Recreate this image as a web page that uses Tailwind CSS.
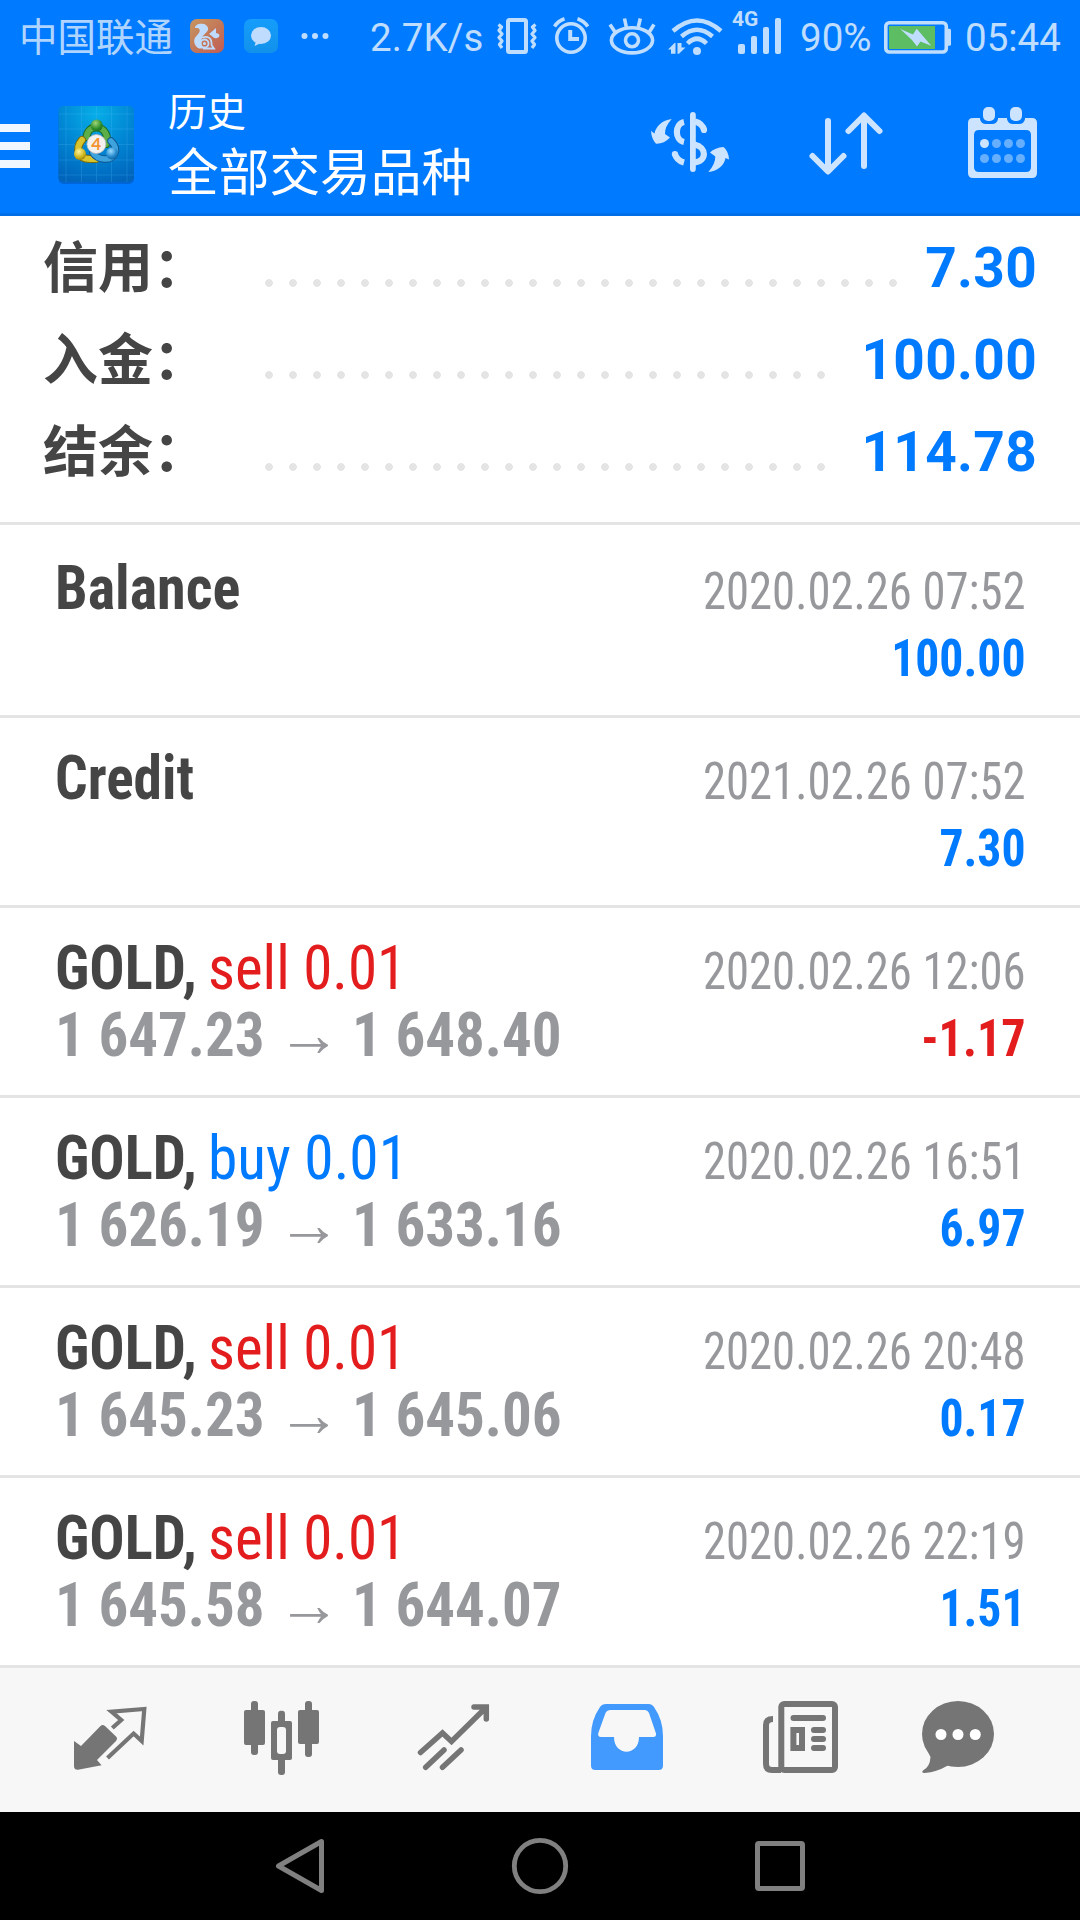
<!DOCTYPE html>
<html lang="zh-CN">
<head>
<meta charset="utf-8">
<title>历史</title>
<script src="https://cdn.jsdelivr.net/npm/@tailwindcss/browser@4"></script>
</head>
<body class="w-[1080px] h-[1920px] overflow-hidden bg-white font-['Roboto','Noto_Sans_CJK_SC',sans-serif]">
<div class="flex flex-col w-[1080px] h-[1920px]">

<header class="h-[216px] shrink-0 bg-[#007aff] border-b-[3px] border-[#006fe8]">
  <!-- status bar -->
  <div class="flex h-[75px] text-[38.5px] leading-[75px] whitespace-nowrap text-white/75">
    <span class="ml-[19px] w-[154px] shrink-0 text-white/70">中国联通</span>
    <svg class="ml-[17px] mt-[19px] shrink-0" width="34" height="34" viewBox="190 19 34 34">
      <defs><linearGradient id="uc" x1="0" y1="0" x2="1" y2="1"><stop offset="0" stop-color="#c7965f"/><stop offset="1" stop-color="#c05c54"/></linearGradient></defs>
      <rect x="190" y="19" width="34" height="34" rx="7" fill="url(#uc)"/>
      <path d="M195 28C195 22.500 207 22 208 28C209 32 203 34 202 38C200 42 202 46 203.500 48.500H199C194 46 193 40 195.500 37C198 34 200.500 32 199.500 29.500C198.500 27.500 197 28 195 28Z" fill="#bfdcff"/>
      <path d="M209 34L216 28V33L219 34C220 36 219 37.500 217 38C213 39 213 36 209 34Z" fill="#bfdcff"/>
      <circle cx="204.500" cy="43.500" r="4" fill="none" stroke="#bfdcff" stroke-width="1.800"/><circle cx="204.500" cy="43.500" r="1.600" fill="#bfdcff"/>
      <path d="M202 37.500C208 35.500 212 38 211.500 45L214 48.500H203" fill="none" stroke="#bfdcff" stroke-width="1.800"/>
    </svg>
    <svg class="ml-[20px] mt-[19px] shrink-0" width="34" height="34" viewBox="244 19 34 34">
      <defs><linearGradient id="msg" x1="0" y1="0" x2="0" y2="1"><stop offset="0" stop-color="#159dfb"/><stop offset="1" stop-color="#1291ea"/></linearGradient></defs>
      <rect x="244" y="19" width="34" height="34" rx="7" fill="url(#msg)"/>
      <ellipse cx="261" cy="35.500" rx="10" ry="8.500" fill="#bfdcff"/><path d="M256 41L254.500 46L261 43Z" fill="#bfdcff"/>
    </svg>
    <svg class="ml-[20px] mt-[19px] shrink-0" width="34" height="34" viewBox="298 19 34 34"><g fill="#bfdeff"><circle cx="304.500" cy="36" r="3"/><circle cx="315" cy="36" r="3"/><circle cx="325.500" cy="36" r="3"/></g></svg>
    <span class="ml-[38px] w-[122px] shrink-0">2.7K/s</span>
    <svg class="shrink-0" width="236" height="75" viewBox="492 0 236 75" fill="none" stroke="#bfdeff" stroke-width="3.600">
      <!-- vibrate -->
      <rect x="508" y="20" width="18" height="32" rx="1.500" stroke-width="4"/>
      <path d="M498.500 24.500l3 2.500l-2.500 3.500l3 3.500l-3 3.500l3 3.500l-2.500 3.500l2.500 3.500M535.500 24.500l-3 2.500l2.500 3.500l-3 3.500l3 3.500l-3 3.500l2.500 3.500l-2.500 3.500" stroke-width="3.200" stroke-linejoin="round"/>
      <!-- alarm -->
      <circle cx="571" cy="38" r="14.200"/>
      <path d="M570.200 30V39H579" stroke-width="4"/>
      <path d="M554.500 26.500Q558 21 564.500 18.800M587.800 26.500Q584 21 577.500 18.800"/>
      <!-- eye -->
      <ellipse cx="632" cy="40.300" rx="20.600" ry="12.600"/><circle cx="632" cy="40.300" r="6.500"/>
      <path d="M610 24.500L615.700 33M624.500 18.500L626.300 27M640.300 18.500L638.300 27M654 24.500L648.700 33"/>
      <!-- wifi -->
      <g stroke-width="4.500"><path d="M673 31Q697 10 721 31M681.500 36.500Q697 23 712.500 36.500M687.500 43.500Q697 34 706.500 43.500"/></g>
      <circle cx="697" cy="51" r="4" fill="#bfdeff" stroke="none"/>
      <path d="M668 49.500L674.500 43H675.500V53.700H671V49.500ZM677.500 43H681.500V47.500H685.500L679 53.700H677.500Z" fill="#bfdeff" stroke="none"/>
    </svg>
    <div class="relative w-[72px] shrink-0">
      <span class="absolute left-[4px] top-[7px] text-[21px] leading-[25px] font-bold">4G</span>
      <div class="flex items-end gap-[6px] h-[54px] pl-[10px]">
        <i class="w-[7px] h-[10px] rounded-[2px] bg-[#bfdeff]"></i><i class="w-[6px] h-[18px] rounded-[2px] bg-[#bfdeff]"></i><i class="w-[6px] h-[27px] rounded-[2px] bg-[#bfdeff]"></i><i class="w-[6px] h-[36px] rounded-[2px] bg-[#bfdeff]"></i>
      </div>
    </div>
    <span class="w-[83px] shrink-0">90%</span>
    <svg class="shrink-0" width="82" height="75" viewBox="883 0 82 75">
      <rect x="885.800" y="22.800" width="60.500" height="29.200" rx="3.500" fill="none" stroke="#bfdeff" stroke-width="3.600"/>
      <path d="M948 28.700h1.500q1.500 0 1.500 1.500v14q0 1.500-1.500 1.500H948Z" fill="#bfdeff"/>
      <rect x="889" y="26" width="46" height="23" fill="#5cbd63"/>
      <path d="M900.300 29L913 34.500L916.700 28.700L931.300 45.700L920.500 41.500L917 46.500L912 40Z" fill="#bfdeff"/>
    </svg>
    <span class="shrink-0">05:44</span>
  </div>

  <!-- app bar -->
  <div class="flex h-[138px] items-start text-white">
    <div class="mt-[49px] flex w-[30px] flex-col gap-[10px]">
      <i class="h-[8px] bg-[#f0f7ff]"></i><i class="h-[8px] bg-[#f0f7ff]"></i><i class="h-[8px] bg-[#f0f7ff]"></i>
    </div>
    <svg class="ml-[25px] mt-[28px] shrink-0" width="82" height="84" viewBox="55 103 82 84">
      <defs>
        <radialGradient id="bg" cx=".5" cy=".1" r=".95"><stop offset="0" stop-color="#06aee8"/><stop offset=".55" stop-color="#0083d2"/><stop offset="1" stop-color="#0064bb"/></radialGradient>
        <radialGradient id="gr" cx=".4" cy=".3" r=".8"><stop offset="0" stop-color="#9fd67a"/><stop offset=".6" stop-color="#2f8f2c"/><stop offset="1" stop-color="#176018"/></radialGradient>
        <radialGradient id="ye" cx=".4" cy=".3" r=".8"><stop offset="0" stop-color="#fff49a"/><stop offset=".6" stop-color="#cdb51d"/><stop offset="1" stop-color="#857208"/></radialGradient>
        <radialGradient id="bl" cx=".4" cy=".3" r=".8"><stop offset="0" stop-color="#9bdcff"/><stop offset=".6" stop-color="#2288cc"/><stop offset="1" stop-color="#0c5590"/></radialGradient>
      </defs>
      <rect x="58.500" y="108" width="75.500" height="76" rx="5" fill="#0054b4" opacity=".55"/>
      <rect x="58.500" y="106" width="75.500" height="76" rx="5" fill="url(#bg)"/>
      <path d="M66 106V182M81.500 106V182M96.500 106V182M111.500 106V182M127 106V182M58.500 114H134M58.500 129H134M58.500 144.500H134M58.500 160H134M58.500 175H134" stroke="#5bc0ff" stroke-width=".7" opacity=".3"/>
      <g fill="none" stroke-linecap="round">
        <path d="M86.500 137C88 124 105 124 107 138L106 144" stroke="#1c6e22" stroke-width="8"/><path d="M86.500 137C88 124 105 124 107 138L106 144" stroke="#5cae48" stroke-width="6"/>
        <path d="M82 140C75 148 78 159 90 159H96" stroke="#7d6c0c" stroke-width="8"/><path d="M82 140C75 148 78 159 90 159H96" stroke="#d8c42c" stroke-width="6"/>
        <path d="M111 141C120 150 114 160 104 159C98 158.500 95 156 93 153" stroke="#0f568f" stroke-width="7.500"/><path d="M111 141C120 150 114 160 104 159C98 158.500 95 156 93 153" stroke="#3ea2dd" stroke-width="5.500"/>
      </g>
      <circle cx="96.700" cy="125.500" r="6" fill="url(#gr)"/><circle cx="80" cy="154" r="6" fill="url(#ye)"/><circle cx="112" cy="153.500" r="6" fill="url(#bl)"/>
      <circle cx="96.400" cy="144" r="9.500" fill="#f3f1f0" stroke="#b9b9b9" stroke-width=".8"/>
      <text x="96.200" y="150" text-anchor="middle" font-family="Lato, sans-serif" font-weight="700" font-size="17" fill="#f59331">4</text>
    </svg>
    <div class="ml-[31px] mt-[13px] w-[482px] shrink-0 whitespace-nowrap">
      <div class="h-[56px] text-[39px] leading-[50px]">历史</div>
      <div class="text-[50.700px] leading-[60px]">全部交易品种</div>
    </div>
    <!-- currency exchange -->
    <svg class="mt-[30px] shrink-0" width="80" height="80" viewBox="650 105 80 80" fill="none" stroke="#cce4ff" stroke-width="6.200">
      <path d="M692.900 115V169" stroke-width="5.800" stroke-linecap="round"/>
      <path d="M684 122C674.500 124 674.500 140 684 142"/>
      <path d="M674.800 153.500Q676.500 160.500 684 162.500" /><circle cx="674.900" cy="154" r="3.100" fill="#cce4ff" stroke="none"/>
      <path d="M695 121.500Q702.500 123.500 704 130"/><circle cx="704" cy="130" r="3.100" fill="#cce4ff" stroke="none"/>
      <path d="M694.500 144.500C707 147 707 161.500 694.500 162.500"/>
      <g fill="#cce4ff" stroke="none">
        <path d="M671.700 119C662 120 655.500 127 654.500 133.500L651 131Q651.500 139 656 143.700Q664 144 670 137.500L665 134Q664.500 127 671.700 119Z"/>
        <path d="M708.300 172C718 171 724.500 165 725.500 158L729 159.500Q728.500 151 723.500 147Q715 147.500 710 152.500L715.300 156.500Q715.500 164 708.300 172Z"/>
      </g>
    </svg>
    <!-- sort -->
    <svg class="ml-[76px] mt-[30px] shrink-0" width="80" height="80" viewBox="806 105 80 80" fill="none" stroke="#cce4ff" stroke-width="6" stroke-linecap="round" stroke-linejoin="round">
      <path d="M828 121V171M812.500 156L828 171.500L843.500 156M864 166V116M848.500 131L864 115.500L879.500 131"/>
    </svg>
    <!-- calendar -->
    <svg class="ml-[80px] mt-[30px] shrink-0" width="74" height="80" viewBox="966 105 74 80">
      <path fill-rule="evenodd" fill="#cce4ff" d="M973 118H980V119Q981 124 986 124H992Q997 124 998 119V118H1007V119Q1008 124 1013 124H1019Q1024 124 1025 119V118H1032Q1037 118 1037 123V173Q1037 178 1032 178H973Q968 178 968 173V123Q968 118 973 118ZM979 130Q974 130 974 135V167Q974 172 979 172H1026Q1031 172 1031 167V135Q1031 130 1026 130Z"/>
      <rect x="983" y="107" width="12" height="14" rx="5" fill="#cce4ff"/><rect x="1010" y="107" width="12" height="14" rx="5" fill="#cce4ff"/>
      <circle cx="984.500" cy="143.500" r="4.500" fill="#cce4ff"/>
      <g fill="#66afff"><circle cx="996.500" cy="143.500" r="4.500"/><circle cx="1008.500" cy="143.500" r="4.500"/><circle cx="1020.500" cy="143.500" r="4.500"/><circle cx="984.500" cy="158.500" r="4.500"/><circle cx="996.500" cy="158.500" r="4.500"/><circle cx="1008.500" cy="158.500" r="4.500"/><circle cx="1020.500" cy="158.500" r="4.500"/></g>
    </svg>
  </div>
</header>

<!-- account summary -->
<section class="h-[309px] shrink-0 border-b-[3px] border-[#e4e4e4] pt-[6px] pl-[43px] pr-[43px] text-[55px] leading-[92px] font-bold whitespace-nowrap">
  <div class="flex h-[92px]"><span class="w-[214px] text-[#454545]">信用：</span><i class="mt-[57px] h-[8px] w-[648px] bg-[radial-gradient(circle_at_center,#e4e4e4_3.500px,transparent_4.200px)] bg-[length:24px_8px]"></i><span class="ml-auto tracking-[0.3px] text-[#007aff]">7.30</span></div>
  <div class="flex h-[92px]"><span class="w-[214px] text-[#454545]">入金：</span><i class="mt-[57px] h-[8px] w-[576px] bg-[radial-gradient(circle_at_center,#e4e4e4_3.500px,transparent_4.200px)] bg-[length:24px_8px]"></i><span class="ml-auto tracking-[0.3px] text-[#007aff]">100.00</span></div>
  <div class="flex h-[92px]"><span class="w-[214px] text-[#454545]">结余：</span><i class="mt-[57px] h-[8px] w-[576px] bg-[radial-gradient(circle_at_center,#e4e4e4_3.500px,transparent_4.200px)] bg-[length:24px_8px]"></i><span class="ml-auto tracking-[0.3px] text-[#007aff]">114.78</span></div>
</section>

<!-- deals -->
<main class="h-[1143px] shrink-0 pt-[3px] font-['Roboto_Condensed','Roboto',sans-serif] leading-[67px] whitespace-nowrap">
  <div class="flex h-[190px] justify-between border-b-[3px] border-[#e4e4e4] pl-[55px] pr-[54px]">
    <div class="pt-[26px] text-[62px] font-bold text-[#454545]"><div class="origin-left scale-x-[.938]">Balance</div></div>
    <div class="pt-[30px] text-[52px] text-right"><div class="origin-right scale-x-[.897] text-[#97989c]">2020.02.26 07:52</div><div class="origin-right scale-x-[.917] font-bold text-[#007aff]">100.00</div></div>
  </div>
  <div class="flex h-[190px] justify-between border-b-[3px] border-[#e4e4e4] pl-[55px] pr-[54px]">
    <div class="pt-[26px] text-[62px] font-bold text-[#454545]"><div class="origin-left scale-x-[.925]">Credit</div></div>
    <div class="pt-[30px] text-[52px] text-right"><div class="origin-right scale-x-[.897] text-[#97989c]">2021.02.26 07:52</div><div class="origin-right scale-x-[.917] font-bold text-[#007aff]">7.30</div></div>
  </div>
  <div class="flex h-[190px] justify-between border-b-[3px] border-[#e4e4e4] pl-[55px] pr-[54px]">
    <div class="pt-[26px] text-[62px]">
      <div class="flex h-[67px]"><span class="w-[153px] origin-left scale-x-[.946] font-bold text-[#454545]">GOLD,</span><span class="origin-left scale-x-[.952] text-[#e31c1e]">sell 0.01</span></div>
      <div class="flex h-[67px] font-bold text-[#97989c]"><span class="w-[222px] origin-left scale-x-[.951]">1 647.23</span><span class="w-[75px] font-['Liberation_Sans',sans-serif] text-[64px]">→</span><span class="origin-left scale-x-[.951]">1 648.40</span></div>
    </div>
    <div class="pt-[30px] text-[52px] text-right"><div class="origin-right scale-x-[.897] text-[#97989c]">2020.02.26 12:06</div><div class="origin-right scale-x-[.925] font-bold text-[#e31c1e]">-1.17</div></div>
  </div>
  <div class="flex h-[190px] justify-between border-b-[3px] border-[#e4e4e4] pl-[55px] pr-[54px]">
    <div class="pt-[26px] text-[62px]">
      <div class="flex h-[67px]"><span class="w-[153px] origin-left scale-x-[.946] font-bold text-[#454545]">GOLD,</span><span class="origin-left scale-x-[.958] text-[#007aff]">buy 0.01</span></div>
      <div class="flex h-[67px] font-bold text-[#97989c]"><span class="w-[222px] origin-left scale-x-[.951]">1 626.19</span><span class="w-[75px] font-['Liberation_Sans',sans-serif] text-[64px]">→</span><span class="origin-left scale-x-[.951]">1 633.16</span></div>
    </div>
    <div class="pt-[30px] text-[52px] text-right"><div class="origin-right scale-x-[.897] text-[#97989c]">2020.02.26 16:51</div><div class="origin-right scale-x-[.917] font-bold text-[#007aff]">6.97</div></div>
  </div>
  <div class="flex h-[190px] justify-between border-b-[3px] border-[#e4e4e4] pl-[55px] pr-[54px]">
    <div class="pt-[26px] text-[62px]">
      <div class="flex h-[67px]"><span class="w-[153px] origin-left scale-x-[.946] font-bold text-[#454545]">GOLD,</span><span class="origin-left scale-x-[.952] text-[#e31c1e]">sell 0.01</span></div>
      <div class="flex h-[67px] font-bold text-[#97989c]"><span class="w-[222px] origin-left scale-x-[.951]">1 645.23</span><span class="w-[75px] font-['Liberation_Sans',sans-serif] text-[64px]">→</span><span class="origin-left scale-x-[.951]">1 645.06</span></div>
    </div>
    <div class="pt-[30px] text-[52px] text-right"><div class="origin-right scale-x-[.897] text-[#97989c]">2020.02.26 20:48</div><div class="origin-right scale-x-[.917] font-bold text-[#007aff]">0.17</div></div>
  </div>
  <div class="flex h-[190px] justify-between border-b-[3px] border-[#e4e4e4] pl-[55px] pr-[54px]">
    <div class="pt-[26px] text-[62px]">
      <div class="flex h-[67px]"><span class="w-[153px] origin-left scale-x-[.946] font-bold text-[#454545]">GOLD,</span><span class="origin-left scale-x-[.952] text-[#e31c1e]">sell 0.01</span></div>
      <div class="flex h-[67px] font-bold text-[#97989c]"><span class="w-[222px] origin-left scale-x-[.951]">1 645.58</span><span class="w-[75px] font-['Liberation_Sans',sans-serif] text-[64px]">→</span><span class="origin-left scale-x-[.951]">1 644.07</span></div>
    </div>
    <div class="pt-[30px] text-[52px] text-right"><div class="origin-right scale-x-[.897] text-[#97989c]">2020.02.26 22:19</div><div class="origin-right scale-x-[.917] font-bold text-[#007aff]">1.51</div></div>
  </div>
</main>

<!-- tab bar -->
<nav class="flex h-[144px] shrink-0 items-start bg-[#f7f7f7] pt-[22px]">
  <svg class="ml-[60px] shrink-0" width="100" height="100" viewBox="60 1690 100 100">
    <path d="M74 1741L81 1746L100.500 1726Q102.600 1723.800 105 1726L116 1736.500Q118 1738.700 116 1741L97 1760L101.600 1765.300L78 1769.700Q74 1770 74 1766Z" fill="#757575"/>
    <path d="M112.300 1728L121.200 1720L111.500 1711.700L144.300 1709L141.700 1741L133.600 1733.500L107.500 1758" fill="none" stroke="#757575" stroke-width="4.200"/>
  </svg>
  <svg class="ml-[70px] shrink-0" width="100" height="100" viewBox="230 1690 100 100" fill="#757575">
    <rect x="244" y="1710" width="21" height="35" rx="2"/><rect x="251" y="1701" width="7" height="54" rx="3"/>
    <rect x="298" y="1710" width="21" height="34" rx="2"/><rect x="305" y="1701" width="7" height="56" rx="3"/>
    <rect x="278" y="1710.700" width="7" height="64.300" rx="3"/><rect x="271" y="1721" width="21" height="39" rx="2"/><rect x="277" y="1727" width="9" height="27" rx="3" fill="#f7f7f7"/>
  </svg>
  <svg class="ml-[70px] shrink-0" width="110" height="100" viewBox="400 1690 110 100" fill="none" stroke="#757575" stroke-width="5.500" stroke-linecap="round">
    <path d="M420.500 1752.500L442.500 1733L451.500 1741.500L485 1708.500M474 1707H486.300V1719"/>
    <path d="M425.700 1767.300L444 1750M442.500 1767.300L461 1750"/>
  </svg>
  <svg class="ml-[65px] shrink-0" width="100" height="100" viewBox="575 1690 100 100">
    <path fill="#429aff" fill-rule="evenodd" d="M606 1704H648.500Q652 1704 654 1707Q663 1720 663 1736V1765.500Q663 1770 658.500 1770H595.500Q591 1770 591 1765.500V1736Q591 1720 600 1707Q602 1704 606 1704ZM610.500 1710Q607 1710 605.500 1713L598.300 1733Q597.500 1737 601 1737H614C614 1756.500 639 1756.500 639 1737H653Q656.500 1737 656 1733.500L649 1713Q647.500 1710 644.500 1710Z"/>
  </svg>
  <svg class="ml-[75px] shrink-0" width="100" height="100" viewBox="750 1690 100 100" fill="none" stroke="#757575" stroke-width="6">
    <rect x="781.300" y="1704" width="53.700" height="66" rx="3"/>
    <path d="M773 1719Q766 1719 766 1725V1764Q766 1770 772 1770H781"/>
    <path d="M793.500 1718H823M814 1730H823M814 1739H823M814 1748H823" stroke-linecap="round"/>
    <rect x="793.400" y="1730" width="8.600" height="18"/>
  </svg>
  <svg class="ml-[60px] shrink-0" width="100" height="100" viewBox="910 1690 100 100" fill="#757575">
    <ellipse cx="958" cy="1734" rx="36" ry="33"/>
    <path d="M928 1752L930.500 1757Q930 1767 923 1770.500Q921 1773 924.500 1773Q937 1772 947.400 1765.800L955 1764Z"/>
    <g fill="#fff"><circle cx="941" cy="1734.500" r="5.500"/><circle cx="958" cy="1734.500" r="5.500"/><circle cx="975.300" cy="1734.500" r="5.500"/></g>
  </svg>
</nav>

<!-- system navigation -->
<div class="flex h-[108px] shrink-0 items-center justify-center gap-[180px] bg-black">
  <svg width="60" height="60" viewBox="270 1836 60 60" fill="none" stroke="#808080" stroke-width="5" stroke-linejoin="round"><path d="M278.500 1866L321.500 1841.500V1890.500Z"/></svg>
  <svg width="60" height="60" viewBox="510 1836 60 60" fill="none" stroke="#808080" stroke-width="4.800"><circle cx="540" cy="1866" r="25.700"/></svg>
  <svg width="60" height="60" viewBox="750 1836 60 60" fill="none" stroke="#808080" stroke-width="5"><rect x="757.500" y="1843.500" width="45" height="45" rx="1.500"/></svg>
</div>

</div>
</body>
</html>
